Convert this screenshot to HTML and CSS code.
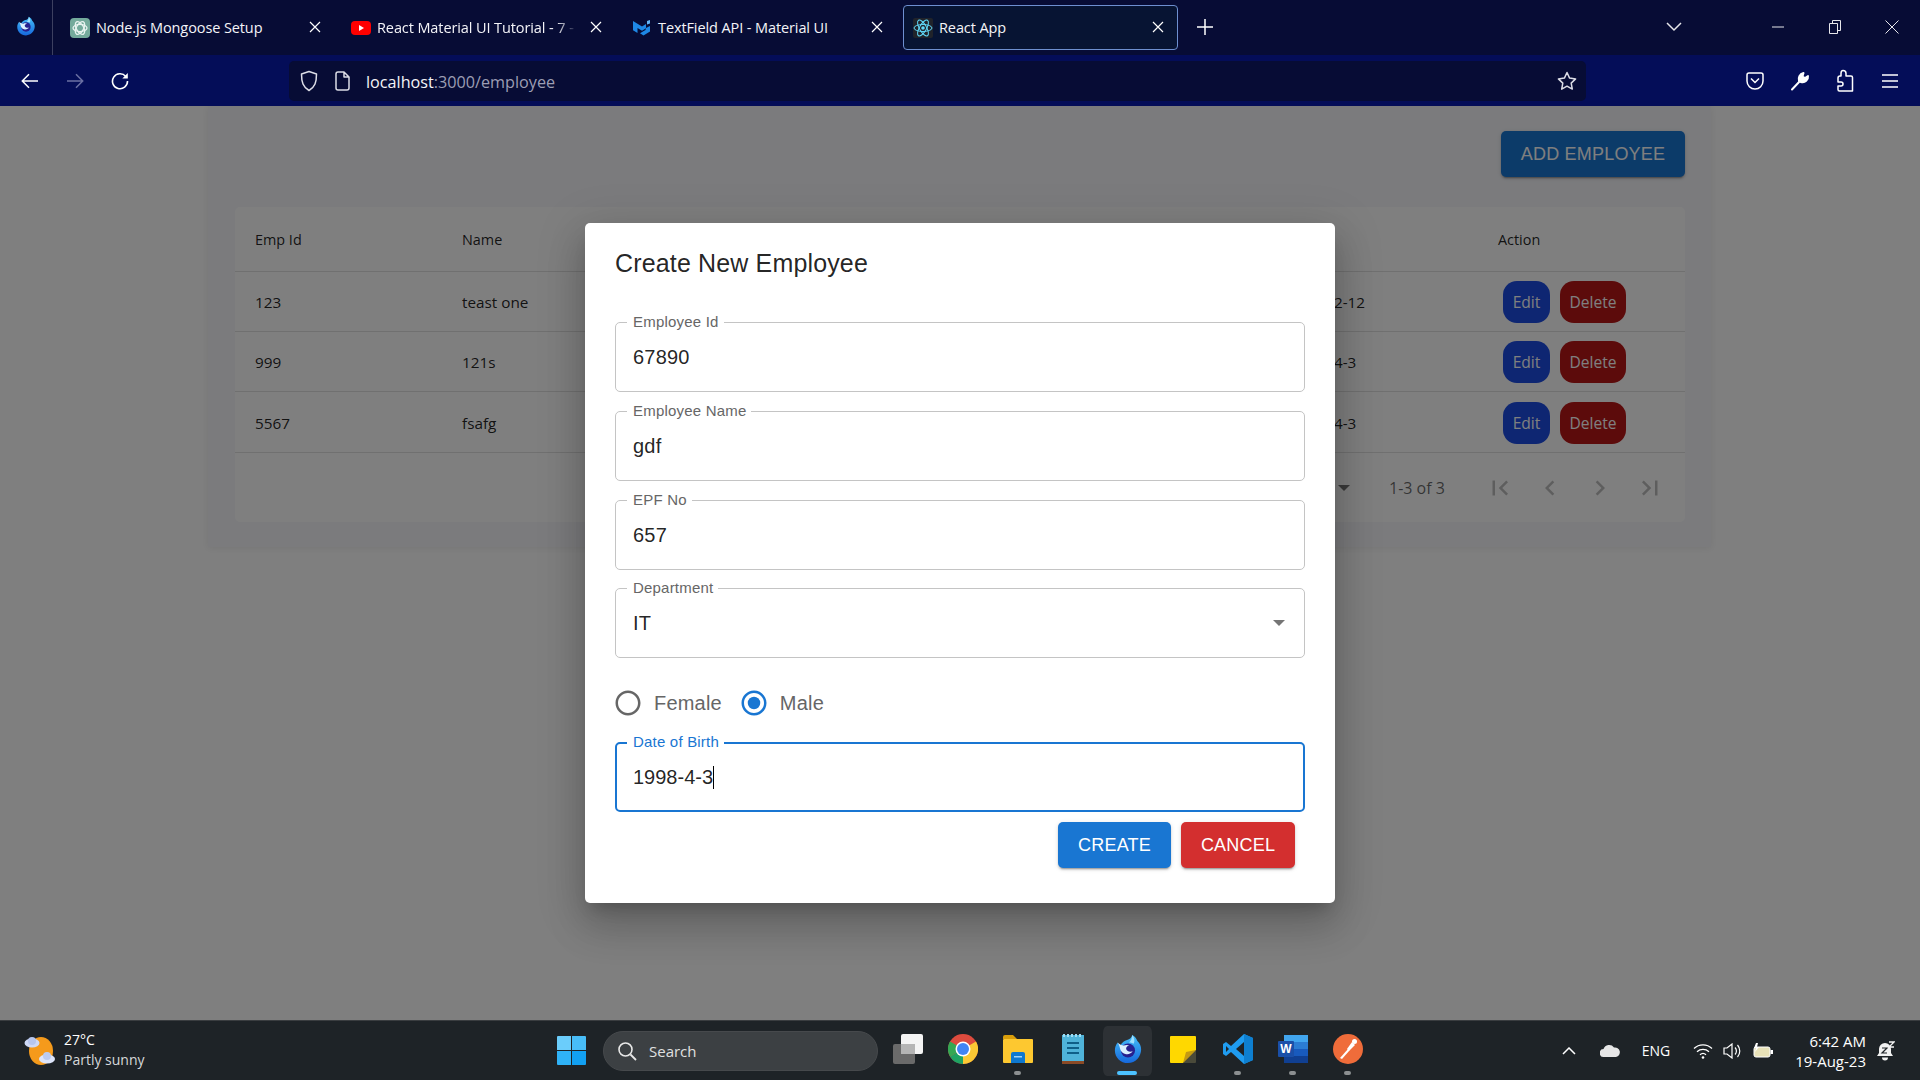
FILE: index.html
```html
<!DOCTYPE html>
<html lang="en">

<head>
    <meta charset="UTF-8">
    <meta name="viewport" content="width=device-width, initial-scale=1.0">
    <title>React App</title>
    <link rel="stylesheet" href="styles.css">
</head>

<body>
    <svg class="defs" width="0" height="0">
        <defs>
            <linearGradient id="foxBlue" x1="0" y1="0" x2="0" y2="1">
                <stop offset="0" stop-color="#45c0fa" />
                <stop offset="1" stop-color="#1668dc" />
            </linearGradient>
            <symbol id="firefox" viewBox="0 0 32 32">
                <path fill="url(#foxBlue)" d="M5 9c.5 1.500 1.500 2.500 3 2.800C10 9 12 7.500 15 6.500 18 5.500 20 4 20.500 1c3 1.800 4.800 4 5.500 6.500 2.500 2.500 4 5.500 4 9C30 24 24 31 16 31 8 31 2 25 2 17.500 2 14 3 11.500 5 9z" />
                <path fill="#9fe0ff" d="M20.500 1c2.500 3 3 6.500 1.500 9.500-1.500-1-3.500-1.500-5-1.500 2-1.500 3.500-4.500 3.500-8z" />
                <circle cx="16" cy="17.500" r="7.500" fill="#27208f" />
                <path fill="#d9f0ff" d="M5 9c2 2 4 3 6.500 3.300 2-.8 4.500-.8 6 0-2 .3-3.500 1.500-3.500 3.200 0 2.500 3.500 4 7 3-1.500 2-4 3.500-7 3-3.500-.5-6-3-6.500-6C7.200 13 6 11 5 9z" />
            </symbol>
            <symbol id="close" viewBox="0 0 12 12">
                <path d="M1 1l10 10M11 1L1 11" fill="none" stroke="currentColor" stroke-width="1.200" />
            </symbol>
            <symbol id="radioOff" viewBox="0 0 24 24">
                <path fill="currentColor" d="M12 2C6.480 2 2 6.480 2 12s4.480 10 10 10 10-4.480 10-10S17.520 2 12 2zm0 18c-4.420 0-8-3.580-8-8s3.580-8 8-8 8 3.580 8 8-3.580 8-8 8z" />
            </symbol>
        </defs>
    </svg>

    <div class="tabbar">
        <div class="app-logo">
            <svg width="20" height="24" viewBox="0 0 32 32"><use href="#firefox" /></svg>
        </div>
        <div class="tabs">
            <div class="tab">
                <svg class="favicon" viewBox="0 0 20 20">
                    <rect width="20" height="20" rx="4" fill="#74aa9c" />
                    <g fill="none" stroke="#e8f3f0" stroke-width="1.300">
                        <ellipse cx="10" cy="10" rx="7" ry="3.600" />
                        <ellipse cx="10" cy="10" rx="7" ry="3.600" transform="rotate(60 10 10)" />
                        <ellipse cx="10" cy="10" rx="7" ry="3.600" transform="rotate(120 10 10)" />
                    </g>
                </svg>
                <span class="tab-title">Node.js Mongoose Setup</span>
                <svg class="tab-close"><use href="#close" /></svg>
            </div>
            <div class="tab">
                <svg class="favicon" viewBox="0 0 20 20">
                    <rect y="3" width="20" height="14" rx="4" fill="#f00" />
                    <path d="M8 7l5 3-5 3z" fill="#fff" />
                </svg>
                <span class="tab-title tab-title-fade">React Material UI Tutorial - 7 - T</span>
                <svg class="tab-close"><use href="#close" /></svg>
            </div>
            <div class="tab">
                <svg class="favicon" viewBox="0 0 20 20">
                    <path d="M1 3l4.500 2.800L10 8.500l4-2.500v4.200l-4 2.500-4.500-2.700v5L1 12.200z" fill="#1e88e5" />
                    <path d="M18 8v5.500l-6.500 4-3.500-2.200 5.500-3.300 .5-2z" fill="#1e88e5" />
                    <path d="M15 3l3-1v3.500l-3 1z" fill="#64b5f6" />
                </svg>
                <span class="tab-title">TextField API - Material UI</span>
                <svg class="tab-close"><use href="#close" /></svg>
            </div>
            <div class="tab tab-active">
                <svg class="favicon" viewBox="0 0 20 20">
                    <rect width="20" height="20" rx="2" fill="#20232a" />
                    <g fill="none" stroke="#61dafb" stroke-width="1">
                        <ellipse cx="10" cy="10" rx="9" ry="3.500" />
                        <ellipse cx="10" cy="10" rx="9" ry="3.500" transform="rotate(60 10 10)" />
                        <ellipse cx="10" cy="10" rx="9" ry="3.500" transform="rotate(120 10 10)" />
                    </g>
                    <circle cx="10" cy="10" r="1.800" fill="#61dafb" />
                </svg>
                <span class="tab-title">React App</span>
                <svg class="tab-close"><use href="#close" /></svg>
            </div>
        </div>
        <div class="new-tab">
            <svg width="16" height="16" viewBox="0 0 16 16"><path d="M8 0v16M0 8h16" stroke="#fff" stroke-width="1.500" /></svg>
        </div>
        <div class="tab-list">
            <svg width="16" height="10" viewBox="0 0 16 10"><path d="M1 1l7 7 7-7" fill="none" stroke="#e6e6ea" stroke-width="1.500" /></svg>
        </div>
        <div class="win-btn">
            <svg width="12" height="2" viewBox="0 0 12 2"><path d="M0 1h12" stroke="#e6e6ea" /></svg>
        </div>
        <div class="win-btn">
            <svg width="12" height="14" viewBox="0 0 12 14"><path d="M.5 3.500h8v10h-8zM3.500 3.500v-3h8v10h-3" fill="none" stroke="#e6e6ea" /></svg>
        </div>
        <div class="win-btn">
            <svg width="14" height="14" viewBox="0 0 14 14"><path d="M.5.500l13 13M13.500.500l-13 13" stroke="#e6e6ea" /></svg>
        </div>
    </div>

    <div class="toolbar">
        <div class="tool-btn">
            <svg width="18" height="16" viewBox="0 0 18 16"><path d="M17 8H1.500M8 1.200L1.300 8 8 14.800" fill="none" stroke="#fff" stroke-width="1.500" /></svg>
        </div>
        <div class="tool-btn">
            <svg width="18" height="16" viewBox="0 0 18 16"><path d="M1 8h15.500M10 1.200L16.700 8 10 14.800" fill="none" stroke="#6b70a3" stroke-width="1.500" /></svg>
        </div>
        <div class="tool-btn">
            <svg width="18" height="18" viewBox="0 0 18 18"><path d="M14.800 4.500A7.500 7.500 0 1 0 16.500 9" fill="none" stroke="#fff" stroke-width="1.600" /><path d="M16.800 1v5.500h-5.500z" fill="#fff" /></svg>
        </div>
        <div class="urlbar">
            <svg class="url-shield" width="18" height="22" viewBox="0 0 18 22"><path d="M9 1.500L1.500 4c0 8 1.500 13 7.500 16.500C15 17 16.500 12 16.500 4z" fill="none" stroke="#dcdde6" stroke-width="1.500" stroke-linejoin="round" /></svg>
            <svg class="url-page" width="16" height="20" viewBox="0 0 16 20"><path d="M3 1h6l5 5v11a2 2 0 0 1-2 2H3a2 2 0 0 1-2-2V3a2 2 0 0 1 2-2zM9 1v5h5" fill="none" stroke="#dcdde6" stroke-width="1.500" stroke-linejoin="round" /></svg>
            <span class="url-text">localhost<span class="url-dim">:3000/employee</span></span>
            <svg class="url-star" width="20" height="20" viewBox="0 0 20 20"><path d="M10 1.500l2.600 5.600 6 .8-4.400 4.200 1.100 6L10 15.200 4.700 18.100l1.100-6L1.400 7.900l6-.8z" fill="none" stroke="#dcdde6" stroke-width="1.500" stroke-linejoin="round" /></svg>
        </div>
        <div class="tool-right">
            <div class="tool-btn">
                <svg width="18" height="20" viewBox="0 0 18 20"><path d="M3 2h12a2 2 0 0 1 2 2v6a8 8 0 0 1-16 0V4a2 2 0 0 1 2-2z" fill="none" stroke="#fff" stroke-width="1.500" /><path d="M5 7.500l4 4 4-4" fill="none" stroke="#fff" stroke-width="1.500" /></svg>
            </div>
            <div class="tool-btn">
                <svg width="20" height="20" viewBox="0 0 20 20"><path d="M2 18.500L10 10M9 10c-1-3 .5-7 4.500-8l-1 3.500 2.500 1.500 3-2c.5 3.500-3 7.500-7 6z" fill="#fff" stroke="#fff" stroke-width="2" stroke-linecap="round" stroke-linejoin="round" /></svg>
            </div>
            <div class="tool-btn">
                <svg width="18" height="24" viewBox="0 0 18 24"><path d="M7 1.500c2 0 3 1 3 3V7h5a1.500 1.500 0 0 1 1.500 1.500V22H3.500a1.500 1.500 0 0 1-1.500-1.500V17h3c1.500 0 2-1 2-2s-.5-2-2-2H2v-4a2 2 0 0 1 2-2h1V4.500c0-2 .5-3 2-3z" fill="none" stroke="#fff" stroke-width="1.500" stroke-linejoin="round" /></svg>
            </div>
            <div class="tool-btn">
                <svg width="16" height="16" viewBox="0 0 16 16"><path d="M0 2h16M0 8h16M0 14h16" stroke="#fff" stroke-width="1.500" /></svg>
            </div>
        </div>
    </div>

    <div class="viewport">
        <div class="page-paper">
            <div class="page-actions">
                <button class="btn btn-add">ADD EMPLOYEE</button>
            </div>
            <div class="table-card">
                <div class="row row-head">
                    <div>Emp Id</div>
                    <div>Name</div>
                    <div></div>
                    <div>Action</div>
                </div>
                <div class="row">
                    <div>123</div>
                    <div>teast one</div>
                    <div>1998-2-12</div>
                    <div class="row-actions"><button class="pill pill-edit">Edit</button><button class="pill pill-delete">Delete</button></div>
                </div>
                <div class="row">
                    <div>999</div>
                    <div>121s</div>
                    <div>1998-4-3</div>
                    <div class="row-actions"><button class="pill pill-edit">Edit</button><button class="pill pill-delete">Delete</button></div>
                </div>
                <div class="row row-last">
                    <div>5567</div>
                    <div>fsafg</div>
                    <div>1998-4-3</div>
                    <div class="row-actions"><button class="pill pill-edit">Edit</button><button class="pill pill-delete">Delete</button></div>
                </div>
                <div class="pagination">
                    <span class="page-caret"></span>
                    <span class="page-count">1-3 of 3</span>
                    <svg class="page-icon" viewBox="0 0 24 24"><path d="M18.410 16.590 13.820 12l4.590-4.590L17 6l-6 6 6 6zM6 6h2v12H6z" /></svg>
                    <svg class="page-icon" viewBox="0 0 24 24"><path d="M15.410 7.410 14 6l-6 6 6 6 1.410-1.410L10.830 12z" /></svg>
                    <svg class="page-icon" viewBox="0 0 24 24"><path d="M10 6 8.590 7.410 13.170 12l-4.580 4.590L10 18l6-6z" /></svg>
                    <svg class="page-icon" viewBox="0 0 24 24"><path d="M5.590 7.410 10.180 12l-4.590 4.590L7 18l6-6-6-6zM16 6h2v12h-2z" /></svg>
                </div>
            </div>
        </div>

        <div class="backdrop">
            <div class="dialog">
                <h2 class="dialog-title">Create New Employee</h2>
                <div class="field">
                    <span class="field-label">Employee Id</span>
                    <div class="field-value">67890</div>
                </div>
                <div class="field">
                    <span class="field-label">Employee Name</span>
                    <div class="field-value">gdf</div>
                </div>
                <div class="field field-short">
                    <span class="field-label">EPF No</span>
                    <div class="field-value">657</div>
                </div>
                <div class="field field-select">
                    <span class="field-label">Department</span>
                    <div class="field-value">IT</div>
                    <span class="select-caret"></span>
                </div>
                <div class="radios">
                    <div class="radio">
                        <svg class="radio-icon"><use href="#radioOff" /></svg>
                        <span>Female</span>
                    </div>
                    <div class="radio radio-on">
                        <svg class="radio-icon" viewBox="0 0 24 24">
                            <use href="#radioOff" width="24" height="24" />
                            <circle cx="12" cy="12" r="5" fill="currentColor" />
                        </svg>
                        <span>Male</span>
                    </div>
                </div>
                <div class="field field-focus">
                    <span class="field-label">Date of Birth</span>
                    <div class="field-value">1998-4-3<span class="caret"></span></div>
                </div>
                <div class="dialog-actions">
                    <button class="btn btn-create">CREATE</button>
                    <button class="btn btn-cancel">CANCEL</button>
                </div>
            </div>
        </div>
    </div>

    <div class="taskbar">
        <div class="weather">
            <svg width="32" height="30" viewBox="0 0 32 30">
                <ellipse cx="17" cy="15" rx="12" ry="14" fill="#f59a1b" />
                <ellipse cx="8" cy="7" rx="7.500" ry="4.500" fill="#cfd9f5" />
                <ellipse cx="8" cy="5" rx="4" ry="4" fill="#b7c6ee" />
                <ellipse cx="23" cy="23" rx="8" ry="4.500" fill="#dde5fa" />
                <ellipse cx="23" cy="20" rx="4" ry="4" fill="#bccbf0" />
            </svg>
            <div class="weather-text">
                <div class="weather-temp">27°C</div>
                <div>Partly sunny</div>
            </div>
        </div>

        <div class="task-center">
            <svg class="win-logo" width="29" height="29" viewBox="0 0 29 29">
                <path d="M0 1a1 1 0 0 1 1-1h13v14H0z" fill="#6bcdfb" />
                <path d="M15 0h13a1 1 0 0 1 1 1v13H15z" fill="#48bdf8" />
                <path d="M0 15h14v14H1a1 1 0 0 1-1-1z" fill="#2fb2f7" />
                <path d="M15 15h14v13a1 1 0 0 1-1 1H15z" fill="#12a0f2" />
            </svg>
            <div class="search">
                <svg width="20" height="20" viewBox="0 0 20 20"><circle cx="8.500" cy="8.500" r="6.500" fill="none" stroke="#e8e8e8" stroke-width="1.600" /><path d="M13.500 13.500L19 19" stroke="#e8e8e8" stroke-width="1.800" /></svg>
                <span>Search</span>
            </div>
            <div class="apps">
                <div class="app">
                    <svg width="30" height="30" viewBox="0 0 30 30">
                        <rect x="0" y="10" width="22" height="20" rx="2" fill="#6a6a6a" />
                        <rect x="8" y="0" width="22" height="20" rx="2" fill="#f4f4f4" />
                        <rect x="8" y="10" width="14" height="10" fill="#b5b5b5" />
                    </svg>
                </div>
                <div class="app">
                    <svg width="30" height="30" viewBox="0 0 30 30">
                        <circle cx="15" cy="15" r="15" fill="#dd4b3e" />
                        <path d="M15 15L2 22.500A15 15 0 0 0 15 30z" fill="#1ea362" />
                        <path d="M15 15v15a15 15 0 0 0 13-22.500z" fill="#fcc934" />
                        <path d="M15 15L2 22.500A15 15 0 0 1 2 7.500z" fill="#34a853" />
                        <circle cx="15" cy="15" r="7.500" fill="#fff" />
                        <circle cx="15" cy="15" r="6" fill="#4285f4" />
                    </svg>
                </div>
                <div class="app app-open">
                    <svg width="30" height="28" viewBox="0 0 30 28">
                        <path d="M0 2a2 2 0 0 1 2-2h8l4 4H0z" fill="#d99e0b" />
                        <rect y="4" width="30" height="24" rx="1" fill="#fdc830" />
                        <path d="M8 19a2 2 0 0 1 2-2h10a2 2 0 0 1 2 2v9H8z" fill="#0e78d0" />
                        <rect x="11" y="21" width="8" height="1.500" fill="#9fd2f7" />
                    </svg>
                </div>
                <div class="app">
                    <svg width="22" height="30" viewBox="0 0 22 30">
                        <rect y="1" width="22" height="26" fill="#4fb3d9" />
                        <rect y="27" width="22" height="3" fill="#8a4a26" />
                        <path d="M1 0h2v3H1zM5 0h2v3H5zM9 0h2v3H9zM13 0h2v3h-2zM17 0h2v3h-2z" fill="#9fdcf2" />
                        <path d="M5 8h12v2H5zM5 13h12v2H5zM5 18h12v2H5z" fill="#0f5f88" />
                    </svg>
                </div>
                <div class="app app-active">
                    <svg width="30" height="32" viewBox="0 0 32 32"><use href="#firefox" /></svg>
                </div>
                <div class="app">
                    <svg width="26" height="27" viewBox="0 0 26 27">
                        <path d="M1 0h24a1 1 0 0 1 1 1v13L13 27H1a1 1 0 0 1-1-1V1a1 1 0 0 1 1-1z" fill="#ffd800" />
                        <path d="M26 14v12a1 1 0 0 1-1 1H13z" fill="#4a4a3a" />
                        <path d="M26 14L13 27l3-11z" fill="#c49a12" />
                    </svg>
                </div>
                <div class="app app-open">
                    <svg width="30" height="30" viewBox="0 0 30 30">
                        <path d="M21 0l9 4v22l-9 4L8 18l-5 4-3-2V10l3-2 5 4z" fill="#1f9cf0" />
                        <path d="M21 0l9 4v22l-9 4z" fill="#0e7fd0" />
                        <path d="M21 8v14l-8-7z" fill="#1e2327" />
                        <path d="M3 12v6l3-3z" fill="#1e2327" />
                    </svg>
                </div>
                <div class="app app-open">
                    <svg width="30" height="28" viewBox="0 0 30 28">
                        <rect x="6" width="24" height="28" rx="1" fill="#2b7cd3" />
                        <rect x="6" width="24" height="7" fill="#41a5ee" />
                        <rect x="6" y="21" width="24" height="7" fill="#103f91" />
                        <rect x="6" y="14" width="24" height="7" fill="#185abd" />
                        <rect y="6" width="16" height="16" rx="1" fill="#1a4fa8" />
                        <text x="8" y="18" class="word-w">W</text>
                    </svg>
                </div>
                <div class="app app-open">
                    <svg width="30" height="30" viewBox="0 0 30 30">
                        <circle cx="15" cy="15" r="15" fill="#ef6c3a" />
                        <path d="M7 24l8-9 1.500 1.500L9 25z" fill="#fff" />
                        <path d="M14 15l5-7 3 3-6 6z" fill="#fff" />
                        <circle cx="21.500" cy="7.500" r="2.500" fill="#fff" />
                    </svg>
                </div>
            </div>
        </div>

        <div class="tray">
            <svg class="tray-chevron" width="14" height="8" viewBox="0 0 14 8"><path d="M1 7l6-6 6 6" fill="none" stroke="#fff" stroke-width="1.500" /></svg>
            <svg class="tray-cloud" width="20" height="13" viewBox="0 0 20 13"><path d="M4 13a4 4 0 0 1-.5-8A6 6 0 0 1 14 3.500 4.800 4.800 0 0 1 16 13z" fill="#e6e6e6" /></svg>
            <span class="tray-lang">ENG</span>
            <svg class="tray-wifi" width="20" height="16" viewBox="0 0 20 16"><path d="M1 5.500a13 13 0 0 1 18 0M4 8.700a9 9 0 0 1 12 0M7 11.700a4.500 4.500 0 0 1 6 0" fill="none" stroke="#fff" stroke-width="1.300" /><circle cx="10" cy="14.500" r="1.300" fill="#fff" /></svg>
            <svg class="tray-sound" width="20" height="16" viewBox="0 0 20 16"><path d="M1 5h3l5-4v14l-5-4H1z" fill="none" stroke="#fff" stroke-width="1.200" /><path d="M12 4.500a5 5 0 0 1 0 7M14.500 2a9 9 0 0 1 0 12" fill="none" stroke="#fff" stroke-width="1.200" /></svg>
            <svg class="tray-battery" width="20" height="16" viewBox="0 0 20 16"><rect x="1" y="4" width="16" height="10" rx="2" fill="#e8e2b8" stroke="#fff" /><rect x="17.500" y="7" width="2.500" height="4" fill="#fff" /><path d="M3 0L1 5h2l-1 4 4-5H4l1-4z" fill="#fff" /></svg>
            <div class="clock">
                <div>6:42 AM</div>
                <div>19-Aug-23</div>
            </div>
            <svg class="tray-bell" width="18" height="20" viewBox="0 0 18 20"><path d="M8 2a6 6 0 0 0-6 6v4l-2 3h16l-2-3V8a6 6 0 0 0-6-6zM5 16.500h6a3 3 0 0 1-6 0z" fill="#f2f2f2" /><path d="M5 7h5l-5 5h5" fill="none" stroke="#1e2327" stroke-width="1.200" /><path d="M12 1h5l-5 5h5" fill="none" stroke="#f2f2f2" stroke-width="1.300" /></svg>
        </div>
    </div>
</body>

</html>
```

FILE: styles.css
```css
* {
    box-sizing: border-box;
}

body {
    margin: 0;
    width: 1920px;
    height: 1080px;
    overflow: hidden;
    font-family: "Liberation Sans", Arial, sans-serif;
    background-color: #fff;
}

button {
    border: none;
    font-family: inherit;
}

.defs {
    display: block;
    height: 0;
}

/* browser tabs */
.tabbar {
    height: 55px;
    display: flex;
    background-color: #070c35;
    color: #fff;
}

.app-logo {
    width: 53px;
    display: flex;
    align-items: center;
    justify-content: center;
    border-right: 1px solid #3c4060;
    padding-bottom: 3px;
}

.tabs {
    display: flex;
    gap: 6px;
    margin-left: 7px;
}

.tab {
    width: 275px;
    height: 45px;
    margin-top: 5px;
    padding: 0 13px 0 9px;
    display: flex;
    align-items: center;
    border: 1px solid transparent;
    border-radius: 4px;
}

.tab-active {
    background-color: #071433;
    border-color: #6d8fd0;
}

.favicon {
    width: 20px;
    height: 20px;
    flex: none;
}

.tab-title {
    margin-left: 6px;
    flex: 1;
    min-width: 0;
    white-space: nowrap;
    font-family: "Open Sans", sans-serif;
    font-size: 14.5px;
    letter-spacing: -0.1px;
    color: #f4f4f8;
}

.tab-title-fade {
    -webkit-mask-image: linear-gradient(to right, #000 84%, transparent 94%);
    mask-image: linear-gradient(to right, #000 84%, transparent 94%);
}

.tab-close {
    width: 12px;
    height: 12px;
    flex: none;
    color: #fff;
    margin-top: -2px;
}

.new-tab {
    width: 54px;
    display: flex;
    align-items: center;
    justify-content: center;
    padding-bottom: 1px;
}

.tab-list {
    width: 24px;
    margin-left: 430px;
    display: flex;
    align-items: center;
    justify-content: center;
    padding-bottom: 1px;
}

.win-btn {
    width: 57px;
    display: flex;
    align-items: center;
    justify-content: center;
    padding-bottom: 1px;
}

.tab-list + .win-btn {
    margin-left: 63px;
}

/* url row */
.toolbar {
    height: 51px;
    padding-left: 7px;
    display: flex;
    align-items: center;
    background-color: #040d58;
}

.tool-btn {
    width: 45px;
    display: flex;
    align-items: center;
    justify-content: center;
}

.urlbar {
    width: 1297px;
    height: 40px;
    margin-left: 147px;
    margin-top: 1px;
    padding: 0 9px 0 11px;
    display: flex;
    align-items: center;
    border-radius: 5px;
    background-color: #070c35;
}

.url-page {
    margin-left: 17px;
}

.url-text {
    margin-left: 15px;
    padding-top: 1px;
    font-family: "Open Sans", sans-serif;
    font-size: 16.2px;
    color: #f4f4f8;
}

.url-dim {
    color: #9c9eb4;
}

.url-star {
    margin-left: auto;
}

.tool-right {
    display: flex;
    margin-left: 146px;
}

/* page behind the dialog */
.viewport {
    position: relative;
    height: 914px;
    overflow: hidden;
    background-color: #fff;
}

.page-paper {
    width: 1503px;
    height: 441px;
    margin-left: 208px;
    padding: 25px 26px 0 27px;
    background-color: #f6f7fb;
    box-shadow: 0 1px 8px rgba(0, 0, 0, 0.08);
}

.page-actions {
    display: flex;
    justify-content: flex-end;
}

.btn {
    height: 46px;
    border-radius: 5px;
    color: #fff;
    font-size: 18px;
    letter-spacing: 0.2px;
    box-shadow: 0 3px 1px -2px rgba(0, 0, 0, 0.2), 0 2px 2px rgba(0, 0, 0, 0.14), 0 1px 5px rgba(0, 0, 0, 0.12);
}

.btn-add {
    width: 184px;
    background-color: #1976d2;
}

.table-card {
    margin-top: 30px;
    height: 315px;
    border-radius: 5px;
    background-color: #fff;
    font-family: "Open Sans", sans-serif;
    font-size: 15.3px;
    color: rgba(0, 0, 0, 0.87);
}

.row {
    height: 60px;
    display: grid;
    grid-template-columns: 207px 832px 204px 1fr;
    align-items: center;
    padding-left: 20px;
    border-bottom: 1px solid #e0e0e0;
}

.row-head {
    height: 65px;
    font-size: 14.4px;
}

.row-last {
    height: 61px;
    padding-top: 1px;
}

.row-actions {
    display: flex;
    gap: 10px;
    margin-left: 5px;
}

.pill {
    height: 42px;
    padding: 0;
    border-radius: 14px;
    color: #fff;
    font-family: "Open Sans", sans-serif;
    font-size: 15.6px;
}

.pill-edit {
    width: 47px;
    background-color: #1c4ce4;
}

.pill-delete {
    width: 66px;
    background-color: #b81616;
}

.pagination {
    height: 69px;
    padding-left: 1103px;
    display: flex;
    align-items: center;
    color: rgba(0, 0, 0, 0.6);
    font-size: 16px;
}

.page-caret {
    width: 0;
    height: 0;
    border-left: 6px solid transparent;
    border-right: 6px solid transparent;
    border-top: 6px solid rgba(0, 0, 0, 0.54);
    margin-right: 39px;
}

.page-count {
    width: 96px;
}

.page-icon {
    width: 30px;
    height: 30px;
    margin-right: 20px;
    fill: rgba(0, 0, 0, 0.26);
}

/* dialog */
.backdrop {
    position: absolute;
    top: 0;
    left: 0;
    right: 0;
    bottom: 0;
    display: flex;
    align-items: center;
    justify-content: center;
    background-color: rgba(0, 0, 0, 0.5);
}

.dialog {
    width: 750px;
    height: 680px;
    padding: 0 30px;
    border-radius: 5px;
    background-color: #fff;
    box-shadow: 0 11px 15px -7px rgba(0, 0, 0, 0.2), 0 24px 38px 3px rgba(0, 0, 0, 0.14), 0 9px 46px 8px rgba(0, 0, 0, 0.12);
}

.dialog-title {
    margin: 20px 0 39px;
    font-size: 25px;
    line-height: 40px;
    font-weight: 400;
    letter-spacing: 0.15px;
    color: rgba(0, 0, 0, 0.87);
}

.field {
    position: relative;
    height: 70px;
    margin-bottom: 19px;
    padding: 0 17px 0 16px;
    display: flex;
    align-items: center;
    border: 1px solid #c4c4c4;
    border-radius: 5px;
}

.field-short {
    margin-bottom: 18px;
}

.field-label {
    position: absolute;
    top: -10px;
    left: 11px;
    padding: 0 5px 0 6px;
    background-color: #fff;
    font-size: 15px;
    line-height: 18px;
    letter-spacing: 0.2px;
    color: #666;
}

.field-value {
    display: flex;
    align-items: center;
    margin-left: 1px;
    font-size: 20px;
    color: rgba(0, 0, 0, 0.87);
    letter-spacing: 0.19px;
}

.field-focus {
    margin-bottom: 10px;
    padding: 0 15px;
    border: 2px solid #1976d2;
}

.field-focus .field-label {
    top: -11px;
    left: 10px;
    color: #1976d2;
}

.field-focus .field-value {
    letter-spacing: 0;
}

.caret {
    width: 1px;
    height: 23px;
    background-color: #000;
}

.select-caret {
    margin-left: auto;
    margin-right: 2px;
    width: 0;
    height: 0;
    border-left: 6px solid transparent;
    border-right: 6px solid transparent;
    border-top: 6px solid #757575;
}

.radios {
    height: 40px;
    margin: 25px 0 19px -2px;
    display: flex;
    gap: 17px;
}

.radio {
    display: flex;
    align-items: center;
    gap: 11px;
    font-size: 20px;
    letter-spacing: 0.19px;
    color: #666;
}

.radio-icon {
    width: 30px;
    height: 30px;
    color: #666;
}

.radio-on .radio-icon {
    color: #1976d2;
}

.dialog-actions {
    display: flex;
    justify-content: flex-end;
    gap: 10px;
    padding-right: 10px;
}

.btn-create {
    width: 113px;
    background-color: #1976d2;
}

.btn-cancel {
    width: 114px;
    background-color: #d32f2f;
}

/* windows taskbar */
.taskbar {
    height: 60px;
    display: grid;
    grid-template-columns: 557px 1fr auto;
    align-items: center;
    background-color: #1e2327;
    border-top: 1px solid #3a3d40;
    color: #fff;
}

.weather {
    display: flex;
    align-items: center;
    gap: 8px;
    padding-left: 24px;
}

.weather-text {
    margin-top: -2px;
    font-family: "Open Sans", sans-serif;
    font-size: 14px;
    line-height: 20px;
    color: #d6d8da;
}

.weather-temp {
    color: #fff;
}

.task-center {
    display: flex;
    align-items: center;
}

.search {
    width: 275px;
    height: 40px;
    margin-left: 17px;
    padding-left: 13px;
    display: flex;
    align-items: center;
    gap: 12px;
    border-radius: 20px;
    background-color: #3c4043;
    border: 1px solid #46494c;
    font-family: "Open Sans", sans-serif;
    font-size: 15px;
    color: #e0e0e0;
}

.apps {
    display: flex;
    margin-left: 2px;
}

.app {
    position: relative;
    width: 55px;
    height: 50px;
    display: flex;
    align-items: center;
    justify-content: center;
    padding-bottom: 3px;
}

.app-open::after {
    content: '';
    position: absolute;
    bottom: 1px;
    left: 24px;
    width: 7px;
    height: 4px;
    border-radius: 2px;
    background-color: #8c8f91;
}

.app-active {
    background-color: #2d3135;
    background-clip: padding-box;
    border-left: 3px solid transparent;
    border-right: 3px solid transparent;
    border-radius: 7px;
}

.app-active::after {
    content: '';
    position: absolute;
    bottom: 1px;
    left: 14px;
    width: 20px;
    height: 4px;
    border-radius: 2px;
    background-color: #4cc2ff;
}

.tray {
    display: flex;
    align-items: center;
    padding-right: 25px;
}

.tray-cloud {
    margin-left: 24px;
}

.tray-lang {
    margin-left: 22px;
    font-family: "Open Sans", sans-serif;
    font-size: 14px;
}

.tray-wifi {
    margin-left: 23px;
}

.tray-sound {
    margin-left: 10px;
}

.tray-battery {
    margin-left: 10px;
}

.clock {
    margin-left: 22px;
    text-align: right;
    font-family: "Open Sans", sans-serif;
    font-size: 15px;
    line-height: 20px;
}

.tray-bell {
    margin-left: 11px;
}

.word-w {
    font-family: "Liberation Sans", sans-serif;
    font-size: 12px;
    font-weight: 700;
    fill: #fff;
    text-anchor: middle;
}
```
